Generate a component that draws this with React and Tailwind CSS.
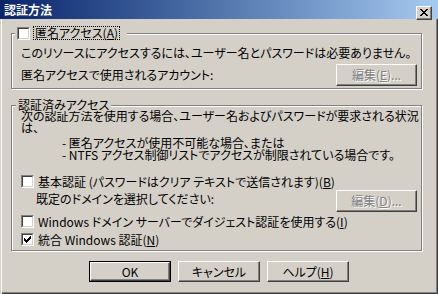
import React from "react";

const jp = "font-['Noto_Sans_CJK_JP','Noto_Sans_CJK_SC',sans-serif] [font-feature-settings:'palt']";

function Check({ checked }) {
  return (
    <span className="block w-[13px] h-[13px] shrink-0 border border-t-[#808080] border-l-[#808080] border-r-white border-b-white">
      <span className="relative block w-full h-full bg-white border border-t-[#404040] border-l-[#404040] border-r-[#d4d0c8] border-b-[#d4d0c8]">
        {checked ? (
          <svg className="absolute left-[1px] top-[1px]" width="7" height="7" viewBox="0 0 7 7" shapeRendering="crispEdges">
            <path fill="#000" d="M6 0h1v1H6zM5 1h2v1H5zM0 2h1v1H0zM4 2h3v1H4zM0 3h2v1H0zM3 3h3v1H3zM0 4h5v1H0zM1 5h3v1H1zM2 6h1v1H2z" />
          </svg>
        ) : null}
      </span>
    </span>
  );
}

function Btn({ children, disabled, isDefault, w = "w-[82px]", h = "h-[21px]" }) {
  const face = (
    <div className="w-full h-full flex items-center justify-center border border-t-white border-l-white border-r-[#404040] border-b-[#404040] shadow-[inset_-1px_-1px_0_#808080]">
      <span className={disabled ? "text-[#808080] [text-shadow:1px_1px_0_#fff]" : "text-black"}>{children}</span>
    </div>
  );
  return (
    <div className={`${w} ${h} shrink-0 ${isDefault ? "border border-black" : ""}`}>{face}</div>
  );
}

function Group({ legend, className, children }) {
  return (
    <div className={`relative w-[411px] border border-[#808080] shadow-[inset_1px_1px_0_#fff,1px_1px_0_#fff] ${className}`}>
      {legend}
      {children}
    </div>
  );
}

export default function App() {
  return (
    <div className={`w-[438px] h-[294px] bg-[#d4d0c8] flex flex-col text-[12px] leading-[12px] text-black ${jp}`}>
      {/* title bar */}
      <div className="h-[19px] shrink-0 flex items-center justify-between bg-gradient-to-r from-[#0a246a] to-[#a6caf0] pl-[4px] pr-[6px]">
        <span className="text-white font-bold text-[12px]">認証方法</span>
        <div className="w-[16px] h-[14px] mt-[7px] bg-[#d4d0c8] border border-t-white border-l-white border-r-[#404040] border-b-[#404040] shadow-[inset_-1px_-1px_0_#808080] flex items-start justify-start">
          <svg className="ml-[3px] mt-[2px]" width="8" height="7" viewBox="0 0 8 7" shapeRendering="crispEdges">
            <path fill="#000" d="M0 0h2v1H0zM6 0h2v1H6zM1 1h2v1H1zM5 1h2v1H5zM2 2h4v1H2zM3 3h2v1H3zM2 4h4v1H2zM1 5h2v1H1zM5 5h2v1H5zM0 6h2v1H0zM6 6h2v1H6z" />
          </svg>
        </div>
      </div>

      {/* body */}
      <div className="flex-1 flex flex-col pl-[11px] shadow-[inset_1px_0_0_#d4d0c8,inset_2px_0_0_#fff,inset_-1px_-1px_0_#404040,inset_-2px_-2px_0_#808080]">
        <Group
          className="mt-[14px] pl-[9px] pr-[4px] pt-[12px] pb-[2px]"
          legend={
            <div className="absolute left-[3px] top-[-8px] h-[14px] flex items-center bg-[#d4d0c8] pl-[2px] pr-[7px]">
              <Check />
              <span className="ml-[3px] h-[14px] px-[1px] flex items-center border border-dotted border-black">
                匿名アクセス(<u>A</u>)
              </span>
            </div>
          }
        >
          <div className="h-[13px] leading-[13px] whitespace-nowrap">
            このリソースにアクセスするには、ユーザー名とパスワードは必要ありません。
          </div>
          <div className="mt-[5px] flex items-center justify-between">
            <span className="whitespace-nowrap">匿名アクセスで使用されるアカウント:</span>
            <Btn disabled w="w-[81px]" h="h-[22px]">
              編集(<u>E</u>)...
            </Btn>
          </div>
        </Group>

        <Group
          className="mt-[16px] pl-[9px] pr-[4px] pt-[4px] pb-[4px]"
          legend={
            <div className="absolute left-[4px] top-[-7px] h-[12px] flex items-center bg-[#d4d0c8] px-[2px] whitespace-nowrap">
              認証済みアクセス
            </div>
          }
        >
          <div className="whitespace-nowrap">次の認証方法を使用する場合、ユーザー名およびパスワードが要求される状況</div>
          <div className="whitespace-nowrap">は、</div>
          <div className="mt-[3px] pl-[41px] whitespace-pre">- 匿名アクセスが使用不可能な場合、または</div>
          <div className="pl-[41px] whitespace-pre">- NTFS アクセス制御リストでアクセスが制限されている場合です。</div>

          <div className="mt-[14px] flex items-center">
            <Check />
            <span className="ml-[4px] whitespace-nowrap">
              基本認証 (パスワードはクリア テキストで送信されます)(<u>B</u>)
            </span>
          </div>
          <div className="mt-[2px] flex items-start justify-between">
            <span className="mt-[3px] ml-[15px] whitespace-nowrap">既定のドメインを選択してください:</span>
            <Btn disabled w="w-[81px]" h="h-[22px]">
              編集(<u>D</u>)...
            </Btn>
          </div>
          <div className="mt-[3px] flex items-center">
            <Check />
            <span className="ml-[4px] whitespace-nowrap">
              Windows ドメイン サーバーでダイジェスト認証を使用する(<u>I</u>)
            </span>
          </div>
          <div className="mt-[5px] flex items-center">
            <Check checked />
            <span className="ml-[4px] whitespace-nowrap">
              統合 Windows 認証(<u>N</u>)
            </span>
          </div>
        </Group>

        <div className="mt-[10px] flex justify-center gap-[7px] pr-[11px]">
          <Btn isDefault>OK</Btn>
          <Btn>キャンセル</Btn>
          <Btn>
            ヘルプ(<u>H</u>)
          </Btn>
        </div>
      </div>
    </div>
  );
}
